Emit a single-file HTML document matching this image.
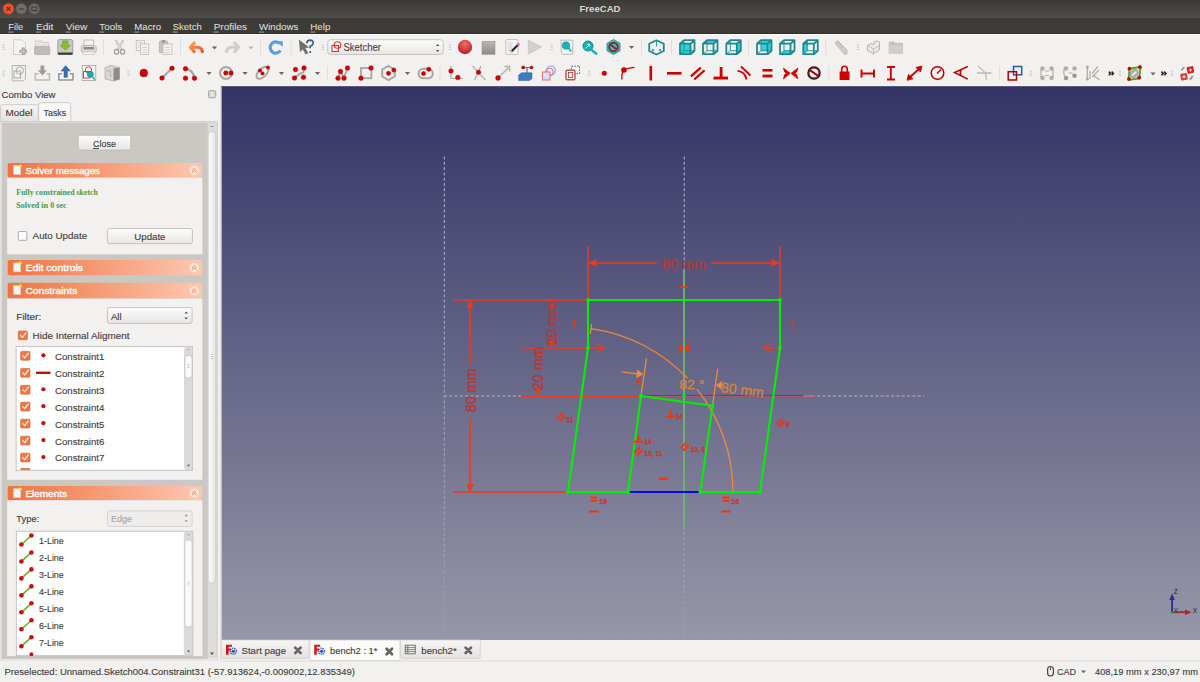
<!DOCTYPE html>
<html><head><meta charset="utf-8"><title>FreeCAD</title>
<style>html,body{margin:0;padding:0;background:#f2f1f0;overflow:hidden;width:1200px;height:682px}svg{display:block}</style>
</head><body>
<svg width="1200" height="682" viewBox="0 0 1200 682">
<defs>
<linearGradient id="gTitle" x1="0" y1="0" x2="0" y2="1"><stop offset="0" stop-color="#3a3935"/><stop offset="1" stop-color="#504e4a"/></linearGradient>
<linearGradient id="gView" x1="0" y1="0" x2="0" y2="1"><stop offset="0" stop-color="#333366"/><stop offset="1" stop-color="#9797a9"/></linearGradient>
<linearGradient id="gHdr" x1="0" y1="0" x2="1" y2="0"><stop offset="0" stop-color="#f0733f"/><stop offset="1" stop-color="#fdc8b2"/></linearGradient>
<linearGradient id="gTab" x1="0" y1="0" x2="0" y2="1"><stop offset="0" stop-color="#f7f6f5"/><stop offset="1" stop-color="#e4e2df"/></linearGradient>
<linearGradient id="gBtn" x1="0" y1="0" x2="0" y2="1"><stop offset="0" stop-color="#fdfdfd"/><stop offset="1" stop-color="#e8e6e4"/></linearGradient>
</defs>
<rect x="0" y="0" width="1200" height="18" fill="url(#gTitle)"/>
<rect x="0" y="18" width="1200" height="16" fill="#3c3b37"/>
<rect x="0" y="33" width="1200" height="1" fill="#2f2e2b"/>
<circle cx="8.5" cy="8.8" r="5.4" fill="#f0542a" stroke="#c8401c" stroke-width="0.6"/>
<path d="M6.6 6.9 L10.4 10.7 M10.4 6.9 L6.6 10.7" stroke="#4a2a1a" stroke-width="1.2"/>
<circle cx="21.3" cy="8.8" r="5.3" fill="#6f6d68" stroke="#5a5854" stroke-width="0.6"/>
<path d="M18.8 9 H23.8" stroke="#3a3935" stroke-width="1"/>
<circle cx="34.3" cy="8.8" r="5.3" fill="#6f6d68" stroke="#5a5854" stroke-width="0.6"/>
<rect x="31.8" y="7" width="5" height="3.6" fill="none" stroke="#3a3935" stroke-width="1"/>
<text x="600" y="12.4" font-family="Liberation Sans, sans-serif" font-size="8.9" font-weight="bold" fill="#dcd8cf" text-anchor="middle" textLength="41" lengthAdjust="spacingAndGlyphs">FreeCAD</text>
<text x="8.3" y="30" font-family="Liberation Sans, sans-serif" font-size="9.9" fill="#dfdbd2" stroke="#dfdbd2" stroke-width="0.1" textLength="15.0" lengthAdjust="spacingAndGlyphs">File</text>
<rect x="8.3" y="31.4" width="5" height="1.4" fill="#8a8780"/>
<text x="36" y="30" font-family="Liberation Sans, sans-serif" font-size="9.9" fill="#dfdbd2" stroke="#dfdbd2" stroke-width="0.1" textLength="17.3" lengthAdjust="spacingAndGlyphs">Edit</text>
<rect x="36.0" y="31.4" width="5" height="1.4" fill="#8a8780"/>
<text x="65.7" y="30" font-family="Liberation Sans, sans-serif" font-size="9.9" fill="#dfdbd2" stroke="#dfdbd2" stroke-width="0.1" textLength="21.6" lengthAdjust="spacingAndGlyphs">View</text>
<rect x="65.7" y="31.4" width="5" height="1.4" fill="#8a8780"/>
<text x="99.3" y="30" font-family="Liberation Sans, sans-serif" font-size="9.9" fill="#dfdbd2" stroke="#dfdbd2" stroke-width="0.1" textLength="23.0" lengthAdjust="spacingAndGlyphs">Tools</text>
<rect x="99.3" y="31.4" width="5" height="1.4" fill="#8a8780"/>
<text x="134.3" y="30" font-family="Liberation Sans, sans-serif" font-size="9.9" fill="#dfdbd2" stroke="#dfdbd2" stroke-width="0.1" textLength="26.7" lengthAdjust="spacingAndGlyphs">Macro</text>
<rect x="134.3" y="31.4" width="5" height="1.4" fill="#8a8780"/>
<text x="172.7" y="30" font-family="Liberation Sans, sans-serif" font-size="9.9" fill="#dfdbd2" stroke="#dfdbd2" stroke-width="0.1" textLength="29.0" lengthAdjust="spacingAndGlyphs">Sketch</text>
<rect x="172.7" y="31.4" width="5" height="1.4" fill="#8a8780"/>
<text x="213.7" y="30" font-family="Liberation Sans, sans-serif" font-size="9.9" fill="#dfdbd2" stroke="#dfdbd2" stroke-width="0.1" textLength="33.3" lengthAdjust="spacingAndGlyphs">Profiles</text>
<rect x="213.7" y="31.4" width="5" height="1.4" fill="#8a8780"/>
<text x="259" y="30" font-family="Liberation Sans, sans-serif" font-size="9.9" fill="#dfdbd2" stroke="#dfdbd2" stroke-width="0.1" textLength="39.3" lengthAdjust="spacingAndGlyphs">Windows</text>
<rect x="259.0" y="31.4" width="5" height="1.4" fill="#8a8780"/>
<text x="310.3" y="30" font-family="Liberation Sans, sans-serif" font-size="9.9" fill="#dfdbd2" stroke="#dfdbd2" stroke-width="0.1" textLength="20.0" lengthAdjust="spacingAndGlyphs">Help</text>
<rect x="310.3" y="31.4" width="5" height="1.4" fill="#8a8780"/>
<rect x="0" y="34" width="1200" height="52" fill="#f2f1f0"/>
<rect x="0" y="34" width="1200" height="1" fill="#fafaf9"/>
<path d="M2.3 45.099999999999994 H4.7 M2.3 47.3 H4.7 M2.3 49.5 H4.7" stroke="#bdbab6" stroke-width="0.8"/>
<path d="M13.5 39.8 H22 L25.5 43.3 V54.5 H13.5 Z" fill="#f4f4f3" stroke="#c9c7c4" stroke-width="0.8"/>
<path d="M19.5 51.3 H27 M23.25 47.6 V55" stroke="#9c9a97" stroke-width="3"/>
<path d="M20.2 51.3 H26.3 M23.25 48.3 V54.3" stroke="#c4c2bf" stroke-width="1.4"/>
<path d="M35 41 H42 L43.5 42.5 H48.5 V54.3 H35 Z" fill="#e6e5e3" stroke="#c2c0bd" stroke-width="0.7"/>
<rect x="34.6" y="46.5" width="15.2" height="8" rx="1" fill="#bebcb9" stroke="#aaa8a5" stroke-width="0.6"/>
<rect x="57.8" y="39.5" width="15" height="15" rx="1.8" fill="#c9c8c6" stroke="#8c8a87" stroke-width="0.7"/>
<rect x="57.8" y="52.6" width="15" height="2.2" rx="1" fill="#3c3c3a"/>
<path d="M62.6 40.8 H68 V45.2 H70.6 L65.3 50.2 L60 45.2 H62.6 Z" fill="#86c227" stroke="#5f951a" stroke-width="0.5"/>
<rect x="84" y="40" width="9.5" height="6" fill="#f4f4f3" stroke="#a8a6a3" stroke-width="0.7"/>
<rect x="81.3" y="45.5" width="15" height="7" rx="2" fill="#dcdbd9" stroke="#a8a6a3" stroke-width="0.7"/>
<rect x="83.5" y="47" width="10.5" height="2.5" fill="#8e8c89"/>
<rect x="83" y="52" width="11.5" height="2.5" fill="#f8f8f7" stroke="#b8b6b3" stroke-width="0.6"/>
<rect x="103.1" y="39.5" width="0.8" height="15.5" fill="#dcdad7"/>
<path d="M116 40.8 L121.2 49.5 M122.9 40.8 L117.7 49.5" stroke="#bdbbb8" stroke-width="2.2" stroke-linecap="round" fill="none"/>
<path d="M116 40.8 L121.2 49.5 M122.9 40.8 L117.7 49.5" stroke="#eeeeed" stroke-width="0.8" stroke-linecap="round" fill="none"/>
<ellipse cx="116.5" cy="51.8" rx="2.2" ry="2.4" fill="none" stroke="#9e9c99" stroke-width="1.2"/>
<ellipse cx="122.6" cy="51.8" rx="2.2" ry="2.4" fill="none" stroke="#9e9c99" stroke-width="1.2"/>
<rect x="136.2" y="40.3" width="8.3" height="10.5" fill="#f2f2f1" stroke="#b5b3b0" stroke-width="0.7"/>
<rect x="140.3" y="44" width="8.5" height="10.5" fill="#f4f4f3" stroke="#b5b3b0" stroke-width="0.7"/>
<path d="M142 47.5 H147 M142 50 H147 M142 52.5 H147 M137.8 42.5 H142.5 M137.8 45 H139.5 M137.8 47.5 H139.5" stroke="#c2c0bd" stroke-width="0.7"/>
<rect x="159.3" y="41.2" width="8.5" height="11.5" rx="1" fill="#c4c2bf" stroke="#a8a6a3" stroke-width="0.6"/>
<rect x="161.8" y="40" width="3.5" height="2.5" fill="#9a9895"/>
<rect x="163" y="44" width="9" height="10.5" fill="#f4f4f3" stroke="#b5b3b0" stroke-width="0.7"/>
<path d="M164.8 47.5 H170 M164.8 50 H170 M164.8 52.5 H170" stroke="#c2c0bd" stroke-width="0.7"/>
<rect x="180.1" y="39.5" width="0.8" height="15.5" fill="#dcdad7"/>
<defs><linearGradient id="gUndo" x1="0" y1="0" x2="1" y2="1"><stop offset="0" stop-color="#f2a45a"/><stop offset="1" stop-color="#e85818"/></linearGradient></defs>
<path d="M194.2 43 L190.3 47.3 L194.2 51.6 M190.8 47.3 H197.3 Q201.6 47.3 202.4 51.6" fill="none" stroke="url(#gUndo)" stroke-width="3.1" stroke-linecap="round" stroke-linejoin="round"/>
<path d="M211.9 46.6 H217.1 L214.5 49.6 Z" fill="#6a6865"/>
<path d="M234.6 43 L238.6 47.3 L234.6 51.6 M238.1 47.3 H231.5 Q227.3 47.3 226.5 51.6" fill="none" stroke="#cfcecc" stroke-width="3.1" stroke-linecap="round" stroke-linejoin="round"/>
<path d="M248.4 46.6 H253.6 L251 49.6 Z" fill="#b8b6b3"/>
<rect x="260.1" y="39.5" width="0.8" height="15.5" fill="#dcdad7"/>
<path d="M280 43.8 A5.6 5.6 0 1 0 280.5 50.5" fill="none" stroke="#5a9ee0" stroke-width="3.2"/>
<path d="M276.5 41.2 H282.8 V47 Z" fill="#5a9ee0"/>
<rect x="290.6" y="39.5" width="0.8" height="15.5" fill="#dcdad7"/>
<path d="M299.3 40.3 L308.5 47.2 L304.8 47.8 L307.8 53 L305.8 54 L302.8 48.8 L300.3 51.6 Z" fill="#6f6f6c" stroke="#555553" stroke-width="0.5"/>
<path d="M306.8 43.2 Q307 40.2 310 40.2 Q313.3 40.3 313.2 43 Q313 45.3 310.2 46.2 V48.3" fill="none" stroke="#355f8f" stroke-width="1.7"/>
<circle cx="310.2" cy="52" r="1.1" fill="#355f8f"/>
<path d="M321.8 45.099999999999994 H324.2 M321.8 47.3 H324.2 M321.8 49.5 H324.2" stroke="#bdbab6" stroke-width="0.8"/>
<rect x="327.7" y="39.7" width="115.6" height="14.8" rx="3" fill="url(#gBtn)" stroke="#bdbab6" stroke-width="0.8"/>
<rect x="332" y="45.5" width="6.5" height="6" fill="#fff" stroke="#d83030" stroke-width="1.1"/>
<circle cx="337.5" cy="45" r="3.3" fill="none" stroke="#d83030" stroke-width="1.1"/>
<text x="343.5" y="50.8" font-family="Liberation Sans, sans-serif" font-size="10" fill="#444" stroke="#444" stroke-width="0.12" textLength="37.5" lengthAdjust="spacingAndGlyphs">Sketcher</text>
<path d="M435.8 46 L437.6 44 L439.4 46 Z M435.8 50 L437.6 52 L439.4 50 Z" fill="#555"/>
<path d="M448.8 45.099999999999994 H451.2 M448.8 47.3 H451.2 M448.8 49.5 H451.2" stroke="#bdbab6" stroke-width="0.8"/>
<defs><radialGradient id="gRec" cx="0.5" cy="0.3" r="0.7"><stop offset="0" stop-color="#f07060"/><stop offset="1" stop-color="#b81830"/></radialGradient></defs>
<circle cx="465" cy="47" r="7.2" fill="url(#gRec)"/>
<defs><linearGradient id="gStop" x1="0" y1="0" x2="0" y2="1"><stop offset="0" stop-color="#b8b7b5"/><stop offset="1" stop-color="#8e8d8b"/></linearGradient></defs>
<rect x="482" y="41.3" width="13" height="13" fill="url(#gStop)" stroke="#8a8987" stroke-width="0.5"/>
<rect x="505.8" y="39.6" width="12.3" height="14.8" rx="1" fill="#f6f6f5" stroke="#b0aeab" stroke-width="0.7"/>
<rect x="507.5" y="42" width="5" height="10" fill="#e2e1df"/>
<path d="M511 52 L518.5 44.3" stroke="#2a2a2a" stroke-width="2.2"/><path d="M517.5 45.2 L519.3 43.4" stroke="#e070d0" stroke-width="2.2"/><path d="M510.5 52.5 L512 51" stroke="#e8e060" stroke-width="1.5"/>
<path d="M528.3 40.2 L542 47 L528.3 54 Z" fill="#d2d1cf" stroke="#bdbcba" stroke-width="0.6"/>
<path d="M550.5 45.099999999999994 H552.9000000000001 M550.5 47.3 H552.9000000000001 M550.5 49.5 H552.9000000000001" stroke="#bdbab6" stroke-width="0.8"/>
<path d="M561.2 40.2 H572.8 V54.3 H563 L561.2 52.5 Z" fill="#f4f4f3" stroke="#a6a4a1" stroke-width="0.7"/>
<circle cx="566" cy="45.6" r="3.8" fill="#1ab0b8" stroke="#108a90" stroke-width="0.5"/>
<path d="M568.5 48.2 L571.3 51.5" stroke="#1ab0b8" stroke-width="1.8"/>
<circle cx="588" cy="46" r="5" fill="#1ab0b8" stroke="#0e8a90" stroke-width="1"/>
<path d="M591.5 50 L597 54.2" stroke="#1ab0b8" stroke-width="2.4"/>
<path d="M585.5 48.5 L589.5 44.5 M587.2 44.3 H589.7 V46.8" fill="none" stroke="#e8f8f8" stroke-width="0.9"/>
<path d="M613.5 39.5 L620 43.3 V50.8 L613.5 54.5 L607 50.8 V43.3 Z" fill="#2ac4cc" stroke="#108a90" stroke-width="0.8"/>
<circle cx="613.5" cy="47" r="4.3" fill="none" stroke="#b01818" stroke-width="1.9"/>
<path d="M610.3 44.5 L616.7 49.5" stroke="#b01818" stroke-width="1.9"/>
<path d="M628.9 46.1 H634.1 L631.5 49.1 Z" fill="#6a6865"/>
<rect x="641.1" y="39.5" width="0.8" height="15.5" fill="#dcdad7"/>
<path d="M656.5 40.3 L663.8 43.8 V51 L656.5 54.5 L649.2 51 V43.8 Z" fill="none" stroke="#1e8a90" stroke-width="1.8" stroke-linejoin="round"/>
<path d="M656.5 41 V46.5 M651.5 51.5 L653.5 50 M661.5 51.5 L659.5 50 M651.8 49.6 H653.6 V51.2 M661.2 49.6 H659.4 V51.2" fill="none" stroke="#1e8a90" stroke-width="0.9"/>
<rect x="671.1" y="39.5" width="0.8" height="15.5" fill="#dcdad7"/>
<rect x="680" y="43.7" width="10.5" height="10.5" fill="#30d0dc"/>
<path d="M680 43.7 H690.5 V54.2 H680 Z M680 43.7 L684 40.2 H694.5 V50.7 L690.5 54.2 M690.5 43.7 L694.5 40.2" fill="none" stroke="#1e8a90" stroke-width="1.8" stroke-linejoin="round"/>
<path d="M684 40.2 V50.7 H694.5 M680 54.2 L684 50.7" fill="none" stroke="#1e8a90" stroke-width="0.9"/>
<path d="M703 43.7 L707 40.2 H717.5 L713.5 43.7 Z" fill="#30d0dc"/>
<path d="M703 43.7 H713.5 V54.2 H703 Z M703 43.7 L707 40.2 H717.5 V50.7 L713.5 54.2 M713.5 43.7 L717.5 40.2" fill="none" stroke="#1e8a90" stroke-width="1.8" stroke-linejoin="round"/>
<path d="M707 40.2 V50.7 H717.5 M703 54.2 L707 50.7" fill="none" stroke="#1e8a90" stroke-width="0.9"/>
<path d="M736.8 43.7 L740.8 40.2 V50.7 L736.8 54.2 Z" fill="#30d0dc"/>
<path d="M726.3 43.7 H736.8 V54.2 H726.3 Z M726.3 43.7 L730.3 40.2 H740.8 V50.7 L736.8 54.2 M736.8 43.7 L740.8 40.2" fill="none" stroke="#1e8a90" stroke-width="1.8" stroke-linejoin="round"/>
<path d="M730.3 40.2 V50.7 H740.8 M726.3 54.2 L730.3 50.7" fill="none" stroke="#1e8a90" stroke-width="0.9"/>
<rect x="748.1" y="39.5" width="0.8" height="15.5" fill="#dcdad7"/>
<rect x="761" y="40.2" width="10.5" height="10.5" fill="#30d0dc"/>
<path d="M757 43.7 H767.5 V54.2 H757 Z M757 43.7 L761 40.2 H771.5 V50.7 L767.5 54.2 M767.5 43.7 L771.5 40.2" fill="none" stroke="#1e8a90" stroke-width="1.8" stroke-linejoin="round"/>
<path d="M761 40.2 V50.7 H771.5 M757 54.2 L761 50.7" fill="none" stroke="#1e8a90" stroke-width="0.9"/>
<path d="M780 54.2 L784 50.7 H794.5 L790.5 54.2 Z" fill="#30d0dc"/>
<path d="M780 43.7 H790.5 V54.2 H780 Z M780 43.7 L784 40.2 H794.5 V50.7 L790.5 54.2 M790.5 43.7 L794.5 40.2" fill="none" stroke="#1e8a90" stroke-width="1.8" stroke-linejoin="round"/>
<path d="M784 40.2 V50.7 H794.5 M780 54.2 L784 50.7" fill="none" stroke="#1e8a90" stroke-width="0.9"/>
<path d="M803.3 43.7 L807.3 40.2 V50.7 L803.3 54.2 Z" fill="#30d0dc"/>
<path d="M803.3 43.7 H813.8 V54.2 H803.3 Z M803.3 43.7 L807.3 40.2 H817.8 V50.7 L813.8 54.2 M813.8 43.7 L817.8 40.2" fill="none" stroke="#1e8a90" stroke-width="1.8" stroke-linejoin="round"/>
<path d="M807.3 40.2 V50.7 H817.8 M803.3 54.2 L807.3 50.7" fill="none" stroke="#1e8a90" stroke-width="0.9"/>
<rect x="825.4" y="39.5" width="0.8" height="15.5" fill="#dcdad7"/>
<path d="M835 43 L837.5 40.5 L847 50 V54 L844.5 54.5 Z" fill="#cfcecc" stroke="#a8a6a3" stroke-width="0.6"/>
<path d="M837.5 43.5 L839 42 M839.5 45.5 L841 44 M841.5 47.5 L843 46" stroke="#8a8886" stroke-width="0.6"/>
<path d="M856.8 45.099999999999994 H859.2 M856.8 47.3 H859.2 M856.8 49.5 H859.2" stroke="#bdbab6" stroke-width="0.8"/>
<path d="M867.5 45.5 L871 43.5 L874 44.8 V42.3 L877 40.8 L879.5 42 V50 L873.5 53.8 L867.5 50.5 Z" fill="#ebeae8" stroke="#9e9c99" stroke-width="0.7"/>
<path d="M867.5 45.5 L873.5 49 L879.5 45.5 M873.5 49 V53.8" fill="none" stroke="#9e9c99" stroke-width="0.6"/>
<path d="M889.2 42 H894 L895.3 43.3 H902.5 V53.3 H889.2 Z" fill="#c6c5c3" stroke="#b5b3b0" stroke-width="0.6"/>
<rect x="889.2" y="45.3" width="13.3" height="8" fill="#d0cfcd"/>
<path d="M2.3 71.1 H4.7 M2.3 73.3 H4.7 M2.3 75.5 H4.7" stroke="#bdbab6" stroke-width="0.8"/>
<path d="M12.2 65.5 H25.5 V79 L23.5 80.8 H12.2 Z" fill="#f0f0ef" stroke="#a6a4a1" stroke-width="0.8"/>
<rect x="14" y="71" width="6.5" height="7" fill="none" stroke="#9a9895" stroke-width="0.8"/>
<circle cx="19.8" cy="70.5" r="3.6" fill="none" stroke="#9a9895" stroke-width="0.8"/>
<path d="M38.5 73.8 H35.3 V80 H49.5 V73.8 H46.3" fill="none" stroke="#bdbbb8" stroke-width="1.6" stroke-linejoin="round"/>
<path d="M40.5 65.5 H44.3 V70.3 H47 L42.4 75.5 L37.8 70.3 H40.5 Z" fill="#9e9c99"/>
<path d="M62 73.8 H58.8 V80 H73 V73.8 H69.8" fill="none" stroke="#9a9895" stroke-width="1.6" stroke-linejoin="round"/>
<path d="M64 77.3 H67.4 V71 H70.3 L65.7 65.6 L61.1 71 H64 Z" fill="#3a6cb4" stroke="#2c5a98" stroke-width="0.5"/>
<rect x="82.3" y="65.5" width="13.5" height="15" fill="#f7f7f6" stroke="#a6a4a1" stroke-width="0.8"/>
<rect x="83.5" y="71.5" width="6.5" height="6.5" fill="none" stroke="#e03030" stroke-width="0.9"/>
<circle cx="88.5" cy="70" r="3.2" fill="none" stroke="#e03030" stroke-width="0.9"/>
<circle cx="90.3" cy="74.3" r="3.1" fill="#1ba8b0" stroke="#0e8088" stroke-width="0.5"/>
<path d="M91.5 76 L95 79.5" stroke="#1ba8b0" stroke-width="1.5"/>
<path d="M105 67.5 L111 65.5 L119.5 67.5 V79.3 L113.5 81 L105 79 Z" fill="#d8d7d5" stroke="#9e9c99" stroke-width="0.6"/>
<path d="M113.5 68.5 L119.5 67.5 V79.3 L113.5 81 Z" fill="#8e8c89"/>
<path d="M107 71.5 Q109 69 111 71.5 Q109 75 111.5 77" fill="none" stroke="#9e9c99" stroke-width="0.7"/>
<path d="M127.3 71.1 H129.7 M127.3 73.3 H129.7 M127.3 75.5 H129.7" stroke="#bdbab6" stroke-width="0.8"/>
<circle cx="143.8" cy="73" r="3.9" fill="#d40000" stroke="#9a0000" stroke-width="0.5"/>
<path d="M162 78 L172 68.3" stroke="#a8a6a3" stroke-width="2"/>
<circle cx="162" cy="78" r="2.3" fill="#d40000" stroke="#9a0000" stroke-width="0.5"/>
<circle cx="172" cy="68.3" r="2.3" fill="#d40000" stroke="#9a0000" stroke-width="0.5"/>
<path d="M185.5 68.7 Q192.5 69.5 194.5 78.2" fill="none" stroke="#a8a6a3" stroke-width="2.2"/>
<circle cx="185.5" cy="68.7" r="2.3" fill="#d40000" stroke="#9a0000" stroke-width="0.5"/>
<circle cx="185.5" cy="78.2" r="2.3" fill="#d40000" stroke="#9a0000" stroke-width="0.5"/>
<circle cx="194.5" cy="78.2" r="2.3" fill="#d40000" stroke="#9a0000" stroke-width="0.5"/>
<path d="M206.4 72.1 H211.6 L209 75.1 Z" fill="#6a6865"/>
<circle cx="226" cy="73" r="5.9" fill="none" stroke="#aaa8a5" stroke-width="2.2"/>
<circle cx="225.8" cy="73" r="2.2" fill="#d40000" stroke="#9a0000" stroke-width="0.5"/>
<circle cx="231" cy="73" r="2.2" fill="#d40000" stroke="#9a0000" stroke-width="0.5"/>
<path d="M242.4 72.1 H247.6 L245 75.1 Z" fill="#6a6865"/>
<ellipse cx="262.5" cy="72.8" rx="7.5" ry="4" transform="rotate(-45 262.5 72.8)" fill="none" stroke="#aaa8a5" stroke-width="2"/>
<circle cx="260" cy="70.5" r="1.7" fill="#d40000" stroke="#9a0000" stroke-width="0.5"/>
<circle cx="262.5" cy="73.5" r="1.7" fill="#d40000" stroke="#9a0000" stroke-width="0.5"/>
<circle cx="268" cy="67.5" r="1.7" fill="#d40000" stroke="#9a0000" stroke-width="0.5"/>
<path d="M278.9 72.1 H284.1 L281.5 75.1 Z" fill="#6a6865"/>
<path d="M294.5 78 Q299 73.5 303.5 72 Q304 70 304 68" fill="none" stroke="#aaa8a5" stroke-width="1.9"/>
<circle cx="295.5" cy="69.5" r="2.3" fill="#d40000" stroke="#9a0000" stroke-width="0.5"/>
<circle cx="304" cy="68" r="2.3" fill="#d40000" stroke="#9a0000" stroke-width="0.5"/>
<circle cx="294.5" cy="78" r="2.3" fill="#d40000" stroke="#9a0000" stroke-width="0.5"/>
<circle cx="303.5" cy="77.2" r="2.3" fill="#d40000" stroke="#9a0000" stroke-width="0.5"/>
<path d="M314.9 72.1 H320.1 L317.5 75.1 Z" fill="#6a6865"/>
<rect x="327.1" y="66" width="0.8" height="14.5" fill="#dcdad7"/>
<path d="M338 78 L340.5 71.5 L344 78 L347.5 68" fill="none" stroke="#aaa8a5" stroke-width="1.9"/>
<circle cx="340.5" cy="71.5" r="2.3" fill="#d40000" stroke="#9a0000" stroke-width="0.5"/>
<circle cx="347.5" cy="68" r="2.3" fill="#d40000" stroke="#9a0000" stroke-width="0.5"/>
<circle cx="338" cy="78.2" r="2.3" fill="#d40000" stroke="#9a0000" stroke-width="0.5"/>
<circle cx="344" cy="78.2" r="2.3" fill="#d40000" stroke="#9a0000" stroke-width="0.5"/>
<rect x="361" y="68" width="10.3" height="10.2" fill="none" stroke="#aaa8a5" stroke-width="1.9"/>
<circle cx="371" cy="68" r="2.3" fill="#d40000" stroke="#9a0000" stroke-width="0.5"/>
<circle cx="361" cy="78.2" r="2.3" fill="#d40000" stroke="#9a0000" stroke-width="0.5"/>
<path d="M388.5 66 L394.8 69.5 V76.5 L388.5 80 L382.2 76.5 V69.5 Z" fill="none" stroke="#aaa8a5" stroke-width="2"/>
<circle cx="388.5" cy="73.3" r="2.1" fill="#d40000" stroke="#9a0000" stroke-width="0.5"/>
<circle cx="393.8" cy="70" r="2.1" fill="#d40000" stroke="#9a0000" stroke-width="0.5"/>
<path d="M404.9 72.1 H410.1 L407.5 75.1 Z" fill="#6a6865"/>
<rect x="418.6" y="68.8" width="14.2" height="9.5" rx="4.7" fill="none" stroke="#aaa8a5" stroke-width="2"/>
<circle cx="423.5" cy="73.5" r="2.1" fill="#d40000" stroke="#9a0000" stroke-width="0.5"/>
<circle cx="428.8" cy="69.3" r="2.1" fill="#d40000" stroke="#9a0000" stroke-width="0.5"/>
<rect x="439.6" y="66" width="0.8" height="14.5" fill="#dcdad7"/>
<path d="M451 66 V78.5 H463" fill="none" stroke="#aaa8a5" stroke-width="1.2"/>
<circle cx="451" cy="71" r="2.3" fill="#d40000" stroke="#9a0000" stroke-width="0.5"/>
<circle cx="457.8" cy="77.5" r="2.3" fill="#d40000" stroke="#9a0000" stroke-width="0.5"/>
<path d="M472.5 66 L485.5 80 M481 66 L474.5 80" stroke="#b8b6b3" stroke-width="1.5"/>
<circle cx="478.5" cy="72.2" r="2.2" fill="#d40000" stroke="#9a0000" stroke-width="0.5"/>
<path d="M498 78 L508 68 M504.5 66.5 H509.5 V71.5" fill="none" stroke="#b5b3b0" stroke-width="1.6"/>
<circle cx="498" cy="78" r="2.4" fill="#d40000" stroke="#9a0000" stroke-width="0.5"/>
<path d="M518.7 75 L521.5 72.8 H532 V78.5 L529.5 80.5 H518.7 Z" fill="#3d7ac0" stroke="#2a5a90" stroke-width="0.5"/>
<path d="M527 67.5 V73" stroke="#3d6a9a" stroke-width="1.1"/><path d="M523 67.5 H531.5" stroke="#3d6a9a" stroke-width="0.9"/>
<circle cx="523.2" cy="67.5" r="1.6" fill="#d40000" stroke="#9a0000" stroke-width="0.5"/>
<circle cx="531.5" cy="67.5" r="1.6" fill="#d40000" stroke="#9a0000" stroke-width="0.5"/>
<circle cx="551" cy="70.5" r="4.3" fill="none" stroke="#9ec4f4" stroke-width="1.8"/>
<circle cx="549.5" cy="72" r="3.8" fill="none" stroke="#e07070" stroke-width="1"/>
<rect x="542.5" y="72" width="7.5" height="8" fill="#cfe0f8" stroke="#e07070" stroke-width="1"/>
<rect x="571.5" y="66.2" width="8" height="7.5" fill="none" stroke="#3b6ec0" stroke-width="1" stroke-dasharray="1.6 1.2"/>
<rect x="566" y="70.3" width="9" height="9.5" rx="1.2" fill="#fff" stroke="#c05050" stroke-width="1.4"/>
<rect x="568.5" y="72.5" width="4.2" height="5" fill="#fff" stroke="#b03030" stroke-width="0.8"/>
<path d="M587.8 71.1 H590.2 M587.8 73.3 H590.2 M587.8 75.5 H590.2" stroke="#bdbab6" stroke-width="0.8"/>
<circle cx="604.3" cy="73.3" r="2.5" fill="#cc0000"/>
<path d="M622 79.5 Q621 72 625 69.5 Q629 67.5 634.5 67.3" fill="none" stroke="#cc0000" stroke-width="1.3"/>
<circle cx="624" cy="70" r="2.8" fill="#cc0000"/>
<rect x="649.5" y="66" width="2.6" height="14.5" fill="#cc0000"/>
<rect x="667" y="72" width="14.5" height="2.6" fill="#cc0000"/>
<path d="M690.8 76.3 L700.8 67.6 M694.2 79.5 L704.6 70.3" stroke="#cc0000" stroke-width="2.2"/>
<rect x="719.7" y="67" width="2.8" height="11" fill="#cc0000"/><rect x="713.5" y="76.6" width="14.5" height="2.9" fill="#cc0000"/>
<path d="M741 66.5 L750.5 75.5 M737.5 70.8 Q745 71.5 746.5 79.5" fill="none" stroke="#cc0000" stroke-width="1.8"/>
<rect x="762.5" y="69" width="10" height="2.6" fill="#cc0000"/><rect x="762.5" y="74.6" width="10" height="2.8" fill="#cc0000"/>
<path d="M783.5 68.2 L790.2 73.3 L783.5 78.8 L784.6 74.6 L786.6 73.3 L784.6 72 Z M797.8 68.2 L791.1 73.3 L797.8 78.8 L796.7 74.6 L794.7 73.3 L796.7 72 Z" fill="#cc0000" stroke="#cc0000" stroke-width="0.8" stroke-linejoin="round"/>
<circle cx="814" cy="73" r="6" fill="#f8f8f8" stroke="#1a1a1a" stroke-width="1.5"/>
<circle cx="814" cy="73" r="4.9" fill="none" stroke="#a00000" stroke-width="1"/>
<path d="M809.8 70.2 L818.2 75.8" stroke="#a00000" stroke-width="2"/>
<rect x="828.6" y="66" width="0.8" height="14.5" fill="#dcdad7"/>
<path d="M841.7 72 V69.5 Q841.7 66.3 844.5 66.3 Q847.3 66.3 847.3 69.5 V72" fill="none" stroke="#cc0000" stroke-width="1.6"/>
<rect x="839.6" y="71.5" width="9.9" height="8.5" fill="#cc0000"/>
<path d="M861.5 69.5 V77.5 M874 69.5 V77.5 M861.5 73.5 H874" stroke="#cc0000" stroke-width="1.9"/>
<path d="M887 67 H895 M887 79.5 H895 M890.8 67 V79.5" stroke="#cc0000" stroke-width="1.9"/>
<path d="M909.5 77.5 L919.5 68.5" stroke="#cc0000" stroke-width="1.8"/>
<path d="M907 80.3 L908.5 74.3 L913 78.8 Z M922 66 L920.5 72 L916 67.5 Z" fill="#cc0000" stroke="#cc0000" stroke-width="0.8"/>
<circle cx="937.5" cy="73" r="6.3" fill="none" stroke="#b80000" stroke-width="1.5"/>
<path d="M937 73.5 L941 69.5" stroke="#b80000" stroke-width="1.4"/>
<path d="M967.8 66.5 L954.5 72.5 L967.8 79.2 M961 69.8 Q959.5 72.6 961.3 75.8" fill="none" stroke="#b80000" stroke-width="1.5"/>
<path d="M977 73 H991.5" stroke="#a8a6a3" stroke-width="1.1"/>
<path d="M978 66 L985.5 73 L986.5 80" fill="none" stroke="#c0bebb" stroke-width="1.3"/>
<rect x="999.1" y="66" width="0.8" height="14.5" fill="#dcdad7"/>
<rect x="1013.5" y="66.5" width="8.2" height="8.3" fill="none" stroke="#2c5a9a" stroke-width="1.5"/>
<rect x="1008.2" y="71.7" width="8.3" height="8.3" fill="none" stroke="#b00000" stroke-width="1.5"/>
<path d="M1029.8 71.1 H1032.2 M1029.8 73.3 H1032.2 M1029.8 75.5 H1032.2" stroke="#bdbab6" stroke-width="0.8"/>
<circle cx="1042.5" cy="68.5" r="2.2" fill="#b0aeab"/><circle cx="1051.5" cy="68.5" r="2.2" fill="#b0aeab"/><circle cx="1042.5" cy="78" r="2.2" fill="#b0aeab"/><circle cx="1051.5" cy="78" r="2.2" fill="#b0aeab"/>
<path d="M1041 69 V78 M1053 69 V78 M1045 71 H1049 M1045 75.5 H1049" stroke="#b0aeab" stroke-width="1.2"/>
<circle cx="1066" cy="68.5" r="2.2" fill="#b0aeab"/><circle cx="1074.5" cy="68.5" r="2.2" fill="#b0aeab"/><circle cx="1066" cy="78" r="2.3" fill="#9a9895"/><circle cx="1074.5" cy="75.8" r="2.3" fill="#9a9895"/>
<path d="M1064 69 Q1063 73 1065 78 M1068.5 73 H1072.5" fill="none" stroke="#b0aeab" stroke-width="1.2"/>
<circle cx="1087.3" cy="67" r="1.5" fill="#a8a6a3"/><circle cx="1087.3" cy="79" r="1.5" fill="#a8a6a3"/><path d="M1087.3 67 V79 M1090 71 V79 M1092 73.5 L1098 66.5 M1092 77 L1099 70 M1093 75 L1099.5 80" stroke="#b0aeab" stroke-width="1.3"/>
<path d="M1108.8 71.6 L1110.6 73.4 L1108.8 75.2 M1111.6 71.6 L1113.4 73.4 L1111.6 75.2" fill="none" stroke="#222" stroke-width="1.5"/>
<path d="M1118.8 71.1 H1121.2 M1118.8 73.3 H1121.2 M1118.8 75.5 H1121.2" stroke="#bdbab6" stroke-width="0.8"/>
<path d="M1129.5 68.5 L1140.5 67 L1139.5 78.5 L1128.5 80 Z" fill="#d8d8d8" stroke="#5aa02a" stroke-width="1.8"/>
<ellipse cx="1134.2" cy="73.5" rx="4.3" ry="3.4" transform="rotate(-40 1134.2 73.5)" fill="#b4b4b4" stroke="#8a8a8a" stroke-width="0.7"/>
<path d="M1132 75.5 L1136.5 71.5" stroke="#fafafa" stroke-width="1.3"/>
<circle cx="1129.4" cy="68.7" r="1.6" fill="#d40000" stroke="#9a0000" stroke-width="0.5"/>
<circle cx="1140" cy="67" r="1.6" fill="#d40000" stroke="#9a0000" stroke-width="0.5"/>
<circle cx="1129" cy="78.9" r="1.6" fill="#d40000" stroke="#9a0000" stroke-width="0.5"/>
<circle cx="1139.2" cy="77.6" r="1.6" fill="#d40000" stroke="#9a0000" stroke-width="0.5"/>
<path d="M1150.4 72.39999999999999 H1155.6 L1153 75.39999999999999 Z" fill="#6a6865"/>
<path d="M1161.4 71.6 L1163.2 73.4 L1161.4 75.2 M1164.2 71.6 L1166 73.4 L1164.2 75.2" fill="none" stroke="#222" stroke-width="1.5"/>
<path d="M1170.8 71.1 H1173.2 M1170.8 73.3 H1173.2 M1170.8 75.5 H1173.2" stroke="#bdbab6" stroke-width="0.8"/>
<rect x="1187" y="66.5" width="6.8" height="6.8" rx="1" transform="rotate(-10 1190.4 69.9)" fill="#d42020"/>
<rect x="1180.6" y="73.3" width="6.8" height="6.8" rx="1" transform="rotate(-10 1184 76.7)" fill="#d42020" fill-opacity="0.85"/>
<path d="M1188.8 70 H1192 M1190.4 68.4 V71.6 M1182.4 76.8 H1185.6 M1184 75.2 V78.4" stroke="#fff" stroke-width="0.9"/>
<path d="M1181.5 70.5 Q1182.5 68 1184.5 67.5 M1192.5 76 Q1192 78.5 1189.5 79.3" fill="none" stroke="#8a8886" stroke-width="1.5"/>
<text x="1.5" y="97.9" font-family="Liberation Sans, sans-serif" font-size="9.7" fill="#3e3e3c" stroke="#3e3e3c" stroke-width="0.13" textLength="54" lengthAdjust="spacingAndGlyphs">Combo View</text>
<rect x="208.5" y="90.6" width="7.3" height="7.3" rx="1.5" fill="#d8d6d3" stroke="#9a9894" stroke-width="0.8"/>
<path d="M210.5 92.6 H212.3 V94.4 M213.8 95.9 H212 V94.1" fill="none" stroke="#fff" stroke-width="0.7"/>
<path d="M0.7 121.5 V106.5 Q0.7 104.7 2.5 104.7 H36.5 Q38.3 104.7 38.3 106.5 V121.5 Z" fill="url(#gTab)" stroke="#c4c1bd" stroke-width="0.8"/>
<path d="M38.7 121.5 V104.5 Q38.7 102.7 40.5 102.7 H68.9 Q70.7 102.7 70.7 104.5 V121.5 Z" fill="#f8f8f7" stroke="#c4c1bd" stroke-width="0.8"/>
<text x="5.5" y="115.8" font-family="Liberation Sans, sans-serif" font-size="9.7" fill="#3e3e3c" stroke="#3e3e3c" stroke-width="0.13" textLength="26.9" lengthAdjust="spacingAndGlyphs">Model</text>
<text x="43.5" y="115.5" font-family="Liberation Sans, sans-serif" font-size="9.7" fill="#3e3e3c" stroke="#3e3e3c" stroke-width="0.13" textLength="22.7" lengthAdjust="spacingAndGlyphs">Tasks</text>
<rect x="1" y="121.5" width="216.5" height="540" fill="#e9e7e5" stroke="#cfccc8" stroke-width="0.8"/>
<rect x="2" y="122.5" width="205.7" height="536.5" fill="#cbc8c4"/>
<rect x="207.5" y="122.3" width="9.7" height="535" rx="3" fill="#dedcda" stroke="#cac7c3" stroke-width="0.6"/>
<defs><linearGradient id="gThumb" x1="0" y1="0" x2="1" y2="0"><stop offset="0" stop-color="#fdfdfc"/><stop offset="1" stop-color="#e6e4e2"/></linearGradient></defs><rect x="208.3" y="131.5" width="7.4" height="451.5" rx="3.5" fill="url(#gThumb)" stroke="#c7c4c0" stroke-width="0.6"/>
<path d="M210.5 126.5 H213.5" stroke="#777" stroke-width="0.8"/>
<path d="M210.8 354.5 H213.2 M210.8 356.5 H213.2 M210.8 358.5 H213.2" stroke="#aeaba7" stroke-width="0.6"/>
<path d="M210 652.5 L214 652.5 L212 655 Z" fill="#555"/>
<rect x="217.8" y="86" width="3.8" height="575" fill="#f2f1f0"/>
<rect x="220.3" y="86" width="0.8" height="575" fill="#d8d6d3"/>
<rect x="78.2" y="135.3" width="52.6" height="14.8" rx="2" fill="url(#gBtn)" stroke="#b9b6b2" stroke-width="0.8"/>
<text x="93" y="146.5" font-family="Liberation Sans, sans-serif" font-size="9.7" fill="#3e3e3c" stroke="#3e3e3c" stroke-width="0.13" textLength="23" lengthAdjust="spacingAndGlyphs">Close</text>
<rect x="93" y="148" width="6" height="0.9" fill="#3e3e3c"/>
<rect x="7.7" y="162.9" width="194.2" height="14.799999999999983" rx="2" fill="url(#gHdr)"/>
<rect x="13.5" y="165.70000000000002" width="7.2" height="9" fill="#f4f4f2" stroke="#c9c6c2" stroke-width="0.5"/>
<circle cx="20.3" cy="166.0" r="1.6" fill="#f2e640"/>
<text x="25.4" y="173.9" font-family="Liberation Sans, sans-serif" font-size="9.9" fill="#ffffff" stroke="#ffffff" stroke-width="0.35" textLength="74.6" lengthAdjust="spacingAndGlyphs">Solver messages</text>
<circle cx="194.3" cy="170.3" r="4.6" fill="#fde7dd"/>
<path d="M192 170.5 L194.3 168.3 L196.6 170.5 M192 172.70000000000002 L194.3 170.5 L196.6 172.70000000000002" fill="none" stroke="#e8784a" stroke-width="0.9"/>
<rect x="7.2" y="177.7" width="195.2" height="76.6" fill="#f2f1f0"/>
<text x="16.25" y="194.6" font-family="Liberation Serif, serif" font-size="7.4" font-weight="bold" fill="#4a9a4a" textLength="81.6" lengthAdjust="spacingAndGlyphs">Fully constrained sketch</text>
<text x="16.25" y="208.3" font-family="Liberation Serif, serif" font-size="7.4" font-weight="bold" fill="#4a9a4a" textLength="50.4" lengthAdjust="spacingAndGlyphs">Solved in 0 sec</text>
<rect x="18.3" y="231.5" width="8.6" height="8.8" rx="1" fill="#fbfbfb" stroke="#9c9995" stroke-width="0.8"/>
<text x="32.6" y="239.3" font-family="Liberation Sans, sans-serif" font-size="9.7" fill="#3e3e3c" stroke="#3e3e3c" stroke-width="0.13" textLength="54.5" lengthAdjust="spacingAndGlyphs">Auto Update</text>
<rect x="107.4" y="228.5" width="85" height="15.2" rx="2" fill="url(#gBtn)" stroke="#b9b6b2" stroke-width="0.8"/>
<text x="134.3" y="239.6" font-family="Liberation Sans, sans-serif" font-size="9.7" fill="#3e3e3c" stroke="#3e3e3c" stroke-width="0.13" textLength="31.2" lengthAdjust="spacingAndGlyphs">Update</text>
<rect x="7.7" y="260.1" width="194.2" height="15.199999999999989" rx="2" fill="url(#gHdr)"/>
<rect x="13.5" y="262.90000000000003" width="7.2" height="9" fill="#f4f4f2" stroke="#c9c6c2" stroke-width="0.5"/>
<circle cx="20.3" cy="263.20000000000005" r="1.6" fill="#f2e640"/>
<text x="25.4" y="271.2" font-family="Liberation Sans, sans-serif" font-size="9.9" fill="#ffffff" stroke="#ffffff" stroke-width="0.35" textLength="57.7" lengthAdjust="spacingAndGlyphs">Edit controls</text>
<circle cx="194.3" cy="267.70000000000005" r="4.6" fill="#fde7dd"/>
<path d="M192 267.90000000000003 L194.3 265.70000000000005 L196.6 267.90000000000003 M192 270.1 L194.3 267.90000000000003 L196.6 270.1" fill="none" stroke="#e8784a" stroke-width="0.9"/>
<rect x="7.7" y="282.8" width="194.2" height="15.800000000000011" rx="2" fill="url(#gHdr)"/>
<rect x="13.5" y="285.6" width="7.2" height="9" fill="#f4f4f2" stroke="#c9c6c2" stroke-width="0.5"/>
<circle cx="20.3" cy="285.90000000000003" r="1.6" fill="#f2e640"/>
<text x="25.4" y="293.9" font-family="Liberation Sans, sans-serif" font-size="9.9" fill="#ffffff" stroke="#ffffff" stroke-width="0.35" textLength="51.9" lengthAdjust="spacingAndGlyphs">Constraints</text>
<circle cx="194.3" cy="290.70000000000005" r="4.6" fill="#fde7dd"/>
<path d="M192 290.90000000000003 L194.3 288.70000000000005 L196.6 290.90000000000003 M192 293.1 L194.3 290.90000000000003 L196.6 293.1" fill="none" stroke="#e8784a" stroke-width="0.9"/>
<rect x="7.2" y="298.6" width="195.2" height="181.1" fill="#f2f1f0"/>
<text x="16.3" y="319.5" font-family="Liberation Sans, sans-serif" font-size="9.7" fill="#3e3e3c" stroke="#3e3e3c" stroke-width="0.13" textLength="24.9" lengthAdjust="spacingAndGlyphs">Filter:</text>
<rect x="107.4" y="307.6" width="84.7" height="15.8" rx="2" fill="url(#gBtn)" stroke="#b9b6b2" stroke-width="0.8"/>
<text x="110.9" y="319.5" font-family="Liberation Sans, sans-serif" font-size="9.7" fill="#3e3e3c" stroke="#3e3e3c" stroke-width="0.13" textLength="10.7" lengthAdjust="spacingAndGlyphs">All</text>
<path d="M184.4 313.6 L186.2 311.6 L188 313.6 Z M184.4 317.6 L186.2 319.6 L188 317.6 Z" fill="#555"/>
<rect x="18.3" y="331" width="9.1" height="8.7" rx="1" fill="#f07746" stroke="#d0602f" stroke-width="0.6"/>
<path d="M20.2 335 L22.4 337.4 L26.3 332.4" fill="none" stroke="#fff" stroke-width="1.1"/>
<text x="32.6" y="338.5" font-family="Liberation Sans, sans-serif" font-size="9.7" fill="#3e3e3c" stroke="#3e3e3c" stroke-width="0.13" textLength="96.9" lengthAdjust="spacingAndGlyphs">Hide Internal Aligment</text>
<rect x="16.1" y="346.7" width="176.5" height="123.6" fill="#ffffff" stroke="#b9b6b2" stroke-width="0.8"/>
<rect x="184.5" y="346.8" width="8" height="123.3" rx="3" fill="#dcdad8" stroke="#c9c6c2" stroke-width="0.5"/>
<rect x="185" y="355.4" width="7" height="22.6" rx="3" fill="#fafaf9" stroke="#bdbab6" stroke-width="0.6"/>
<path d="M187.3 364.5 H189.7 M187.3 366 H189.7 M187.3 367.5 H189.7" stroke="#b5b2ae" stroke-width="0.5"/>
<path d="M187 464.8 L190 464.8 L188.5 466.8 Z" fill="#555"/>
<path d="M187.5 349.8 H189.5" stroke="#777" stroke-width="0.6"/>
<rect x="20.6" y="351.45" width="9.4" height="8.8" rx="1" fill="#f07746" stroke="#d0602f" stroke-width="0.6"/>
<path d="M22.5 355.45 L24.7 357.85 L28.6 352.85" fill="none" stroke="#fff" stroke-width="1.1"/>
<circle cx="43.4" cy="355.35" r="2.1" fill="#c01010"/>
<text x="55" y="359.75" font-family="Liberation Sans, sans-serif" font-size="9.7" fill="#3e3e3c" stroke="#3e3e3c" stroke-width="0.13" textLength="49.3" lengthAdjust="spacingAndGlyphs">Constraint1</text>
<rect x="20.6" y="368.40" width="9.4" height="8.8" rx="1" fill="#f07746" stroke="#d0602f" stroke-width="0.6"/>
<path d="M22.5 372.40 L24.7 374.80 L28.6 369.80" fill="none" stroke="#fff" stroke-width="1.1"/>
<rect x="36" y="371.60" width="14.5" height="2.4" fill="#c01010"/>
<text x="55" y="376.7" font-family="Liberation Sans, sans-serif" font-size="9.7" fill="#3e3e3c" stroke="#3e3e3c" stroke-width="0.13" textLength="49.3" lengthAdjust="spacingAndGlyphs">Constraint2</text>
<rect x="20.6" y="385.35" width="9.4" height="8.8" rx="1" fill="#f07746" stroke="#d0602f" stroke-width="0.6"/>
<path d="M22.5 389.35 L24.7 391.75 L28.6 386.75" fill="none" stroke="#fff" stroke-width="1.1"/>
<circle cx="43.4" cy="389.25" r="2.1" fill="#c01010"/>
<text x="55" y="393.65" font-family="Liberation Sans, sans-serif" font-size="9.7" fill="#3e3e3c" stroke="#3e3e3c" stroke-width="0.13" textLength="49.3" lengthAdjust="spacingAndGlyphs">Constraint3</text>
<rect x="20.6" y="402.30" width="9.4" height="8.8" rx="1" fill="#f07746" stroke="#d0602f" stroke-width="0.6"/>
<path d="M22.5 406.30 L24.7 408.70 L28.6 403.70" fill="none" stroke="#fff" stroke-width="1.1"/>
<circle cx="43.4" cy="406.20" r="2.1" fill="#c01010"/>
<text x="55" y="410.6" font-family="Liberation Sans, sans-serif" font-size="9.7" fill="#3e3e3c" stroke="#3e3e3c" stroke-width="0.13" textLength="49.3" lengthAdjust="spacingAndGlyphs">Constraint4</text>
<rect x="20.6" y="419.25" width="9.4" height="8.8" rx="1" fill="#f07746" stroke="#d0602f" stroke-width="0.6"/>
<path d="M22.5 423.25 L24.7 425.65 L28.6 420.65" fill="none" stroke="#fff" stroke-width="1.1"/>
<circle cx="43.4" cy="423.15" r="2.1" fill="#c01010"/>
<text x="55" y="427.55" font-family="Liberation Sans, sans-serif" font-size="9.7" fill="#3e3e3c" stroke="#3e3e3c" stroke-width="0.13" textLength="49.3" lengthAdjust="spacingAndGlyphs">Constraint5</text>
<rect x="20.6" y="436.20" width="9.4" height="8.8" rx="1" fill="#f07746" stroke="#d0602f" stroke-width="0.6"/>
<path d="M22.5 440.20 L24.7 442.60 L28.6 437.60" fill="none" stroke="#fff" stroke-width="1.1"/>
<circle cx="43.4" cy="440.10" r="2.1" fill="#c01010"/>
<text x="55" y="444.5" font-family="Liberation Sans, sans-serif" font-size="9.7" fill="#3e3e3c" stroke="#3e3e3c" stroke-width="0.13" textLength="49.3" lengthAdjust="spacingAndGlyphs">Constraint6</text>
<rect x="20.6" y="453.15" width="9.4" height="8.8" rx="1" fill="#f07746" stroke="#d0602f" stroke-width="0.6"/>
<path d="M22.5 457.15 L24.7 459.55 L28.6 454.55" fill="none" stroke="#fff" stroke-width="1.1"/>
<circle cx="43.4" cy="457.05" r="2.1" fill="#c01010"/>
<text x="55" y="461.45" font-family="Liberation Sans, sans-serif" font-size="9.7" fill="#3e3e3c" stroke="#3e3e3c" stroke-width="0.13" textLength="49.3" lengthAdjust="spacingAndGlyphs">Constraint7</text>
<rect x="20.6" y="468" width="9.4" height="2" fill="#f07746"/>
<rect x="7.7" y="485.9" width="194.2" height="14.400000000000034" rx="2" fill="url(#gHdr)"/>
<rect x="13.5" y="488.7" width="7.2" height="9" fill="#f4f4f2" stroke="#c9c6c2" stroke-width="0.5"/>
<circle cx="20.3" cy="489.0" r="1.6" fill="#f2e640"/>
<text x="25.4" y="496.7" font-family="Liberation Sans, sans-serif" font-size="9.9" fill="#ffffff" stroke="#ffffff" stroke-width="0.35" textLength="41.6" lengthAdjust="spacingAndGlyphs">Elements</text>
<circle cx="194.3" cy="493.1" r="4.6" fill="#fde7dd"/>
<path d="M192 493.3 L194.3 491.1 L196.6 493.3 M192 495.5 L194.3 493.3 L196.6 495.5" fill="none" stroke="#e8784a" stroke-width="0.9"/>
<rect x="7.2" y="500.3" width="195.2" height="155.7" fill="#f2f1f0"/>
<text x="16.3" y="522" font-family="Liberation Sans, sans-serif" font-size="9.7" fill="#3e3e3c" stroke="#3e3e3c" stroke-width="0.13" textLength="23" lengthAdjust="spacingAndGlyphs">Type:</text>
<rect x="107.4" y="510.9" width="84.7" height="15.5" rx="2" fill="#eeedeb" stroke="#cfccc8" stroke-width="0.8"/>
<text x="110.9" y="522" font-family="Liberation Sans, sans-serif" font-size="9.7" fill="#a8a5a1" stroke="#a8a5a1" stroke-width="0.13" textLength="21" lengthAdjust="spacingAndGlyphs">Edge</text>
<path d="M184.4 516.2 L186.2 514.2 L188 516.2 Z M184.4 520.2 L186.2 522.2 L188 520.2 Z" fill="#999"/>
<rect x="16.3" y="531.2" width="176.5" height="124.5" fill="#ffffff" stroke="#b9b6b2" stroke-width="0.8"/>
<rect x="184.2" y="531.6" width="8.5" height="123.8" rx="3" fill="#dcdad8" stroke="#c9c6c2" stroke-width="0.5"/>
<rect x="184.8" y="540" width="7.4" height="87" rx="3" fill="#fafaf9" stroke="#bdbab6" stroke-width="0.6"/>
<path d="M187.3 582 H189.7 M187.3 583.5 H189.7 M187.3 585 H189.7" stroke="#b5b2ae" stroke-width="0.5"/>
<path d="M187.5 534.8 H189.5" stroke="#777" stroke-width="0.6"/>
<path d="M187 650.5 L190 650.5 L188.5 652.5 Z" fill="#555"/>
<path d="M21.4 544.50 L31.4 535.50" stroke="#6ab02a" stroke-width="1.6"/>
<circle cx="21.4" cy="544.50" r="2.3" fill="#c81010"/>
<circle cx="31.4" cy="535.50" r="2.3" fill="#c81010"/>
<text x="39" y="543.8" font-family="Liberation Sans, sans-serif" font-size="9.7" fill="#3e3e3c" stroke="#3e3e3c" stroke-width="0.13" textLength="24.8" lengthAdjust="spacingAndGlyphs">1-Line</text>
<path d="M21.4 561.45 L31.4 552.45" stroke="#6ab02a" stroke-width="1.6"/>
<circle cx="21.4" cy="561.45" r="2.3" fill="#c81010"/>
<circle cx="31.4" cy="552.45" r="2.3" fill="#c81010"/>
<text x="39" y="560.75" font-family="Liberation Sans, sans-serif" font-size="9.7" fill="#3e3e3c" stroke="#3e3e3c" stroke-width="0.13" textLength="24.8" lengthAdjust="spacingAndGlyphs">2-Line</text>
<path d="M21.4 578.40 L31.4 569.40" stroke="#6ab02a" stroke-width="1.6"/>
<circle cx="21.4" cy="578.40" r="2.3" fill="#c81010"/>
<circle cx="31.4" cy="569.40" r="2.3" fill="#c81010"/>
<text x="39" y="577.7" font-family="Liberation Sans, sans-serif" font-size="9.7" fill="#3e3e3c" stroke="#3e3e3c" stroke-width="0.13" textLength="24.8" lengthAdjust="spacingAndGlyphs">3-Line</text>
<path d="M21.4 595.35 L31.4 586.35" stroke="#6ab02a" stroke-width="1.6"/>
<circle cx="21.4" cy="595.35" r="2.3" fill="#c81010"/>
<circle cx="31.4" cy="586.35" r="2.3" fill="#c81010"/>
<text x="39" y="594.65" font-family="Liberation Sans, sans-serif" font-size="9.7" fill="#3e3e3c" stroke="#3e3e3c" stroke-width="0.13" textLength="24.8" lengthAdjust="spacingAndGlyphs">4-Line</text>
<path d="M21.4 612.30 L31.4 603.30" stroke="#6ab02a" stroke-width="1.6"/>
<circle cx="21.4" cy="612.30" r="2.3" fill="#c81010"/>
<circle cx="31.4" cy="603.30" r="2.3" fill="#c81010"/>
<text x="39" y="611.6" font-family="Liberation Sans, sans-serif" font-size="9.7" fill="#3e3e3c" stroke="#3e3e3c" stroke-width="0.13" textLength="24.8" lengthAdjust="spacingAndGlyphs">5-Line</text>
<path d="M21.4 629.25 L31.4 620.25" stroke="#6ab02a" stroke-width="1.6"/>
<circle cx="21.4" cy="629.25" r="2.3" fill="#c81010"/>
<circle cx="31.4" cy="620.25" r="2.3" fill="#c81010"/>
<text x="39" y="628.55" font-family="Liberation Sans, sans-serif" font-size="9.7" fill="#3e3e3c" stroke="#3e3e3c" stroke-width="0.13" textLength="24.8" lengthAdjust="spacingAndGlyphs">6-Line</text>
<path d="M21.4 646.20 L31.4 637.20" stroke="#6ab02a" stroke-width="1.6"/>
<circle cx="21.4" cy="646.20" r="2.3" fill="#c81010"/>
<circle cx="31.4" cy="637.20" r="2.3" fill="#c81010"/>
<text x="39" y="645.5" font-family="Liberation Sans, sans-serif" font-size="9.7" fill="#3e3e3c" stroke="#3e3e3c" stroke-width="0.13" textLength="24.8" lengthAdjust="spacingAndGlyphs">7-Line</text>
<circle cx="31.4" cy="654.3" r="2" fill="#c81010"/>
<rect x="221.6" y="86" width="978.4" height="554" fill="url(#gView)"/>
<rect x="221.6" y="86" width="978.4" height="1" fill="#5b5a80"/>
<path d="M444.4 156.5 V635 M684.3 156.5 V268.5 M684.3 527 V635" stroke="#9c9cb2" stroke-width="1.3" stroke-dasharray="3 2.3"/>
<path d="M444 635.3 H924 M444 396 H521 M817 396 H924" stroke="#9c9cb2" stroke-width="1.3" stroke-dasharray="3 2.3"/>
<rect x="641" y="394.9" width="162.5" height="1.1" fill="#4c5080"/><rect x="641" y="396" width="162.5" height="1.1" fill="#a05a6e"/>
<rect x="803.5" y="395.4" width="11.5" height="1.4" fill="#d07080"/>
<path d="M684 268.7 V526.7" stroke="#6cb86c" stroke-width="1.8"/>
<path d="M588 246 V300 M780 246 V300" stroke="#ec3a1c" stroke-width="1.5"/>
<path d="M596 263 H657.4 M710.5 263 H772.6" stroke="#ec3a1c" stroke-width="1.5"/>
<path d="M588 263 L596.5 259.3 V266.7 Z M780 263 L771.5 259.3 V266.7 Z" fill="#ec3a1c"/>
<text x="662.1" y="268.5" font-family="Liberation Sans, sans-serif" font-size="14" fill="#b23a36" stroke="#b23a36" stroke-width="0.45" textLength="43.8" lengthAdjust="spacingAndGlyphs">80 mm</text>
<path d="M453.5 300 H588 M453 492 H568 M521.3 348 H604 M521.3 396.2 H641" stroke="#ec3a1c" stroke-width="1.5"/>
<path d="M470.1 307 V364.8 M470.1 418 V484" stroke="#ec3a1c" stroke-width="1.5"/>
<path d="M470.1 300 L466.4 308 H473.8 Z M470.1 492 L466.4 484 H473.8 Z" fill="#ec3a1c"/>
<text transform="translate(476 412.3) rotate(-90)" font-family="Liberation Sans, sans-serif" font-size="14" fill="#b23a36" stroke="#b23a36" stroke-width="0.45" textLength="43.7" lengthAdjust="spacingAndGlyphs">80 mm</text>
<path d="M551.2 300 L548 307.5 H554.4 Z M551.2 348 L548 340.5 H554.4 Z" fill="#ec3a1c"/>
<text transform="translate(557 345.5) rotate(-90)" font-family="Liberation Sans, sans-serif" font-size="14" fill="#b23a36" stroke="#b23a36" stroke-width="0.45" textLength="44" lengthAdjust="spacingAndGlyphs">20 mm</text>
<path d="M538 348 L534.8 355.5 H541.2 Z M538 396 L534.8 388.5 H541.2 Z" fill="#ec3a1c"/>
<text transform="translate(543.3 390.4) rotate(-90)" font-family="Liberation Sans, sans-serif" font-size="14" fill="#b23a36" stroke="#b23a36" stroke-width="0.45" textLength="44" lengthAdjust="spacingAndGlyphs">20 mm</text>
<path d="M597.2 343.6 L604 348 L597.2 352.4 M770.3 344.4 L763.7 348 L770.3 351.7 M763.7 348 H780" fill="none" stroke="#ec3a1c" stroke-width="1.4"/>
<path d="M679.2 344.6 L683 348.3 L679.2 351.8 L680.2 348.3 Z M688.8 344.6 L685 348.3 L688.8 351.8 L687.8 348.3 Z" fill="#ff3000" stroke="#ff3000" stroke-width="1.1" stroke-linejoin="round"/>
<path d="M679.1 287 H688.5" stroke="#ff3000" stroke-width="1.6"/>
<path d="M574.1 320 V328.7 M793.2 320.2 V328.6" stroke="#ff3000" stroke-width="1.4"/>
<path d="M590.96 328.61 A165 165 0 0 1 687.49 378.21 M696.95 389.06 A165 165 0 0 1 733.00 492.00" fill="none" stroke="#ee8a3c" stroke-width="1.3"/>
<path d="M590.27 333.56 L591.66 323.65 M727 492 H738" stroke="#ee8a3c" stroke-width="1.2"/>
<text x="679.2" y="389.3" font-family="Liberation Sans, sans-serif" font-size="13.5" fill="#d8843e" stroke="#d8843e" stroke-width="0.3" textLength="25.2" lengthAdjust="spacingAndGlyphs">82 °</text>
<path d="M646.5 358.3 L641 395.5 M717.7 368.7 L712.6 405.7 M621.6 371.8 L637 373.8" fill="none" stroke="#ee8a3c" stroke-width="1.3"/>
<path d="M643.4 374.5 L637.2 369.6 L636 378 Z M715.8 385.2 L722.5 380.8 L721.5 389.6 Z" fill="#ee8a3c"/>
<text transform="translate(720.5 392) rotate(7.3)" font-family="Liberation Sans, sans-serif" font-size="14" fill="#d8843e" stroke="#d8843e" stroke-width="0.3" textLength="43" lengthAdjust="spacingAndGlyphs">80 mm</text>
<path d="M637 379.8 L643.5 378.4 Q639 381.5 637.6 385.5 L636.8 387 Z" fill="#ff2a10"/>
<path d="M568 492 L588 348 V300 H780 V348 L760 492 H700.3 M628 492 H568" stroke="#00f000" stroke-width="2.1" fill="none" stroke-linejoin="round"/>
<path d="M628 492 L641 396 L712.6 405.7 L700.3 492" stroke="#00f000" stroke-width="2.1" fill="none" stroke-linejoin="round"/>
<path d="M628 492 H700.3" stroke="#0a0adc" stroke-width="2.1"/>
<circle cx="588" cy="300" r="1.9" fill="#00f000"/>
<circle cx="780" cy="300" r="1.9" fill="#00f000"/>
<circle cx="588" cy="348" r="1.9" fill="#00f000"/>
<circle cx="780" cy="348" r="1.9" fill="#00f000"/>
<circle cx="568" cy="492" r="1.9" fill="#00f000"/>
<circle cx="628" cy="492" r="1.9" fill="#00f000"/>
<circle cx="700.3" cy="492" r="1.9" fill="#00f000"/>
<circle cx="760" cy="492" r="1.9" fill="#00f000"/>
<circle cx="641" cy="396" r="1.9" fill="#00f000"/>
<circle cx="712.6" cy="405.7" r="1.9" fill="#00f000"/>
<circle cx="684" cy="396" r="1.9" fill="#00f000"/>
<path d="M557 418.3 L562.6 413.1 M559.5 421.0 L565.1 415.8" stroke="#ff3000" stroke-width="2"/>
<text x="566.5" y="422.2" font-family="Liberation Sans, sans-serif" font-size="7" font-weight="bold" fill="#c8382c" stroke="#c8382c" stroke-width="0.35" textLength="7" lengthAdjust="spacingAndGlyphs">11</text>
<path d="M670.3 409.7 V416.7 M665.6999999999999 416.7 H674.9" stroke="#ff3000" stroke-width="2.1"/>
<text x="676.2" y="419" font-family="Liberation Sans, sans-serif" font-size="7" font-weight="bold" fill="#c8382c" stroke="#c8382c" stroke-width="0.35" textLength="6.6" lengthAdjust="spacingAndGlyphs">14</text>
<path d="M638.6 434.7 V441.7 M634.0 441.7 H643.2" stroke="#ff3000" stroke-width="2.1"/>
<text x="644.5" y="444.4" font-family="Liberation Sans, sans-serif" font-size="7" font-weight="bold" fill="#c8382c" stroke="#c8382c" stroke-width="0.35" textLength="7" lengthAdjust="spacingAndGlyphs">14</text>
<path d="M634.5 452.5 L640.1 447.3 M637.0 455.2 L642.6 450.0" stroke="#ff3000" stroke-width="2"/>
<text x="644.5" y="456.4" font-family="Liberation Sans, sans-serif" font-size="7" font-weight="bold" fill="#c8382c" stroke="#c8382c" stroke-width="0.35" textLength="18" lengthAdjust="spacingAndGlyphs">10, 11</text>
<path d="M680.6 447.9 L686.2 442.7 M683.1 450.59999999999997 L688.7 445.4" stroke="#ff3000" stroke-width="2"/>
<text x="690.7" y="451.5" font-family="Liberation Sans, sans-serif" font-size="7" font-weight="bold" fill="#c8382c" stroke="#c8382c" stroke-width="0.35" textLength="14.1" lengthAdjust="spacingAndGlyphs">10, 9</text>
<path d="M776.5 424 L782.1 418.8 M779.0 426.7 L784.6 421.5" stroke="#ff3000" stroke-width="2"/>
<text x="786" y="426.5" font-family="Liberation Sans, sans-serif" font-size="7" font-weight="bold" fill="#c8382c" stroke="#c8382c" stroke-width="0.35" textLength="3.6" lengthAdjust="spacingAndGlyphs">9</text>
<path d="M659.2 478.7 H668.3 M589 511.5 H598.5 M721.5 511.5 H730.5" stroke="#ff3000" stroke-width="1.9"/>
<path d="M590.5 497.5 H597 M590.5 500.8 H597 M722.5 497.5 H729.3 M722.5 500.8 H729.3" stroke="#ff3000" stroke-width="1.9"/>
<text x="599.5" y="504.2" font-family="Liberation Sans, sans-serif" font-size="7" font-weight="bold" fill="#c8382c" stroke="#c8382c" stroke-width="0.35" textLength="7.5" lengthAdjust="spacingAndGlyphs">16</text>
<text x="731.3" y="504.2" font-family="Liberation Sans, sans-serif" font-size="7" font-weight="bold" fill="#c8382c" stroke="#c8382c" stroke-width="0.35" textLength="7.7" lengthAdjust="spacingAndGlyphs">16</text>
<path d="M1172.1 612.2 V599" stroke="#2a2aa0" stroke-width="1.8"/>
<path d="M1172.1 593.2 L1169.4 600 H1174.8 Z" fill="#2a2aa0"/>
<path d="M1172.1 612.2 H1185.5" stroke="#a02828" stroke-width="1.8"/>
<path d="M1191.6 612.2 L1185 609.5 V614.9 Z" fill="#a02828"/>
<circle cx="1172.1" cy="612.4" r="1.4" fill="#20a020"/>
<text x="1173.8" y="594.2" font-family="Liberation Sans, sans-serif" font-size="6.5" fill="#222" >Z</text>
<text x="1173.8" y="612.6" font-family="Liberation Sans, sans-serif" font-size="6.5" fill="#222" >Y</text>
<text x="1192.8" y="613" font-family="Liberation Sans, sans-serif" font-size="6.5" fill="#222" >X</text>
<rect x="221" y="640" width="979" height="21" fill="#f2f1f0"/>
<rect x="0" y="661" width="1200" height="21" fill="#f2f1f0"/>
<rect x="221" y="660.6" width="979" height="0.8" fill="#dcdad7"/>
<path d="M221.6 640 V656.5 Q221.6 658.6 223.7 658.6 H307 Q309 658.6 309 656.5 V640 Z" fill="url(#gTab)" stroke="#d0cdc9" stroke-width="0.7"/>
<path d="M400.8 640 V656.5 Q400.8 658.6 402.9 658.6 H478.3 Q480.3 658.6 480.3 656.5 V640 Z" fill="url(#gTab)" stroke="#d0cdc9" stroke-width="0.7"/>
<path d="M310 640 V658.5 Q310 660.6 312.1 660.6 H398 Q400 660.6 400 658.5 V640 Z" fill="#fbfbfa" stroke="#cfccc8" stroke-width="0.7"/>
<path d="M226 644.8 H232 V646.8 H228.6 V648.4 H231 V650.4 H228.6 V654.8 H226 Z" fill="#d01818"/>
<circle cx="233.3" cy="651.3" r="3" fill="none" stroke="#2a5ab0" stroke-width="1.6" stroke-dasharray="1.2 0.9"/>
<circle cx="233.3" cy="651.3" r="1.6" fill="#2a5ab0"/>
<path d="M314.2 644.8 H320.2 V646.8 H316.8 V648.4 H319.2 V650.4 H316.8 V654.8 H314.2 Z" fill="#d01818"/>
<circle cx="321.5" cy="651.3" r="3" fill="none" stroke="#2a5ab0" stroke-width="1.6" stroke-dasharray="1.2 0.9"/>
<circle cx="321.5" cy="651.3" r="1.6" fill="#2a5ab0"/>
<rect x="405.2" y="645.2" width="10" height="8.6" fill="#f4f4f4" stroke="#555" stroke-width="0.8"/>
<path d="M405.2 647.6 H415.2 M405.2 649.6 H415.2 M405.2 651.6 H415.2 M407.8 645.2 V653.8" stroke="#555" stroke-width="0.7"/>
<text x="241.5" y="653.8" font-family="Liberation Sans, sans-serif" font-size="9.7" fill="#3e3e3c" stroke="#3e3e3c" stroke-width="0.13" textLength="44.5" lengthAdjust="spacingAndGlyphs">Start page</text>
<text x="330" y="653.8" font-family="Liberation Sans, sans-serif" font-size="9.7" fill="#3e3e3c" stroke="#3e3e3c" stroke-width="0.13" textLength="47.5" lengthAdjust="spacingAndGlyphs">bench2 : 1*</text>
<text x="421.3" y="653.8" font-family="Liberation Sans, sans-serif" font-size="9.7" fill="#3e3e3c" stroke="#3e3e3c" stroke-width="0.13" textLength="35.4" lengthAdjust="spacingAndGlyphs">bench2*</text>
<path d="M295.2 647.5999999999999 L300.59999999999997 653.0 M300.59999999999997 647.5999999999999 L295.2 653.0" stroke="#646464" stroke-width="2.7" stroke-linecap="round"/>
<path d="M386.6 648.8 L392.0 654.2 M392.0 648.8 L386.6 654.2" stroke="#646464" stroke-width="2.7" stroke-linecap="round"/>
<path d="M465.6 647.5999999999999 L471.0 653.0 M471.0 647.5999999999999 L465.6 653.0" stroke="#646464" stroke-width="2.7" stroke-linecap="round"/>
<rect x="1047.6" y="666.5" width="5.8" height="9.5" rx="2.9" fill="none" stroke="#444" stroke-width="1.2"/>
<path d="M1050.5 667.5 V670" stroke="#444" stroke-width="1"/>
<path d="M1081 670.5 H1086 L1083.5 673.3 Z" fill="#666"/>
<text x="4.5" y="674.5" font-family="Liberation Sans, sans-serif" font-size="9.7" fill="#3e3e3c" stroke="#3e3e3c" stroke-width="0.13" textLength="350.5" lengthAdjust="spacingAndGlyphs">Preselected: Unnamed.Sketch004.Constraint31 (-57.913624,-0.009002,12.835349)</text>
<text x="1057" y="674.5" font-family="Liberation Sans, sans-serif" font-size="9.7" fill="#3e3e3c" stroke="#3e3e3c" stroke-width="0.13" textLength="19" lengthAdjust="spacingAndGlyphs">CAD</text>
<text x="1095" y="674.5" font-family="Liberation Sans, sans-serif" font-size="9.7" fill="#3e3e3c" stroke="#3e3e3c" stroke-width="0.13" textLength="103" lengthAdjust="spacingAndGlyphs">408,19 mm x 230,97 mm</text>
</svg>
</body></html>
